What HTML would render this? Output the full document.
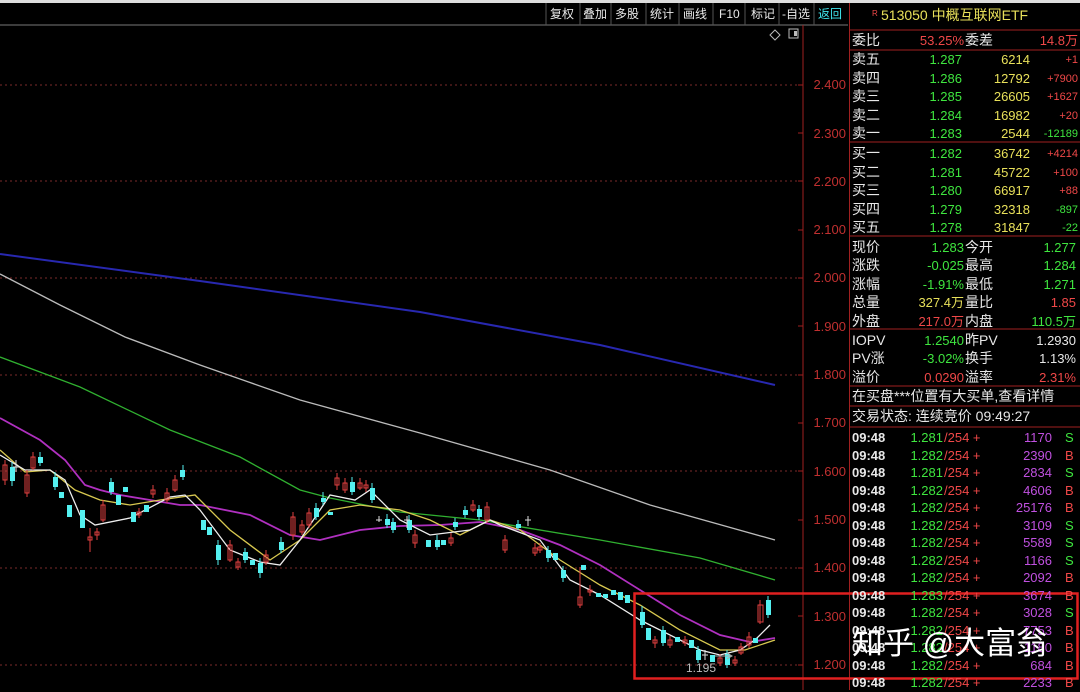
<!DOCTYPE html>
<html><head><meta charset="utf-8"><style>
*{margin:0;padding:0}
body{width:1080px;height:690px;background:#000;overflow:hidden;position:relative;font-family:"Liberation Sans","Noto Sans CJK SC",sans-serif;}
.t{position:absolute;white-space:nowrap;font-size:13px;line-height:16px}
.w{color:#e8e8e8}.g{color:#3fe63f}.y{color:#e8e05a}.r{color:#f04848}.p{color:#c050e0}.c{color:#40e8f0}
.rt{text-align:right}
</style></head><body>
<svg width="1080" height="690" style="position:absolute;left:0;top:0">
<rect x="0" y="0" width="1080" height="3" fill="#ddd"/>
<line x1="0" y1="25" x2="848" y2="25" stroke="#777"/>
<g stroke="#555"><line x1="546" y1="3" x2="546" y2="25"/><line x1="580" y1="3" x2="580" y2="25"/><line x1="611" y1="3" x2="611" y2="25"/><line x1="646" y1="3" x2="646" y2="25"/><line x1="679" y1="3" x2="679" y2="25"/><line x1="713" y1="3" x2="713" y2="25"/><line x1="745" y1="3" x2="745" y2="25"/><line x1="779" y1="3" x2="779" y2="25"/><line x1="814" y1="3" x2="814" y2="25"/></g>
<line x1="803" y1="25" x2="803" y2="690" stroke="#a02020"/>
<line x1="849.5" y1="3" x2="849.5" y2="690" stroke="#a02020"/>
<g stroke="#a02020"><line x1="850" y1="30" x2="1080" y2="30"/><line x1="850" y1="50" x2="1080" y2="50"/><line x1="850" y1="142" x2="1080" y2="142"/><line x1="850" y1="236" x2="1080" y2="236"/><line x1="850" y1="329" x2="1080" y2="329"/><line x1="850" y1="386" x2="1080" y2="386"/><line x1="850" y1="406" x2="1080" y2="406"/><line x1="850" y1="427" x2="1080" y2="427"/></g>
<g stroke="#7a2a2a" stroke-dasharray="2,3"><line x1="0" y1="85" x2="800" y2="85"/><line x1="0" y1="181" x2="800" y2="181"/><line x1="0" y1="278" x2="800" y2="278"/><line x1="0" y1="375" x2="800" y2="375"/><line x1="0" y1="471" x2="800" y2="471"/><line x1="0" y1="568" x2="800" y2="568"/><line x1="0" y1="665" x2="800" y2="665"/></g>
<g stroke="#a02020"><line x1="798" y1="85" x2="803" y2="85"/><line x1="798" y1="133" x2="803" y2="133"/><line x1="798" y1="181" x2="803" y2="181"/><line x1="798" y1="230" x2="803" y2="230"/><line x1="798" y1="278" x2="803" y2="278"/><line x1="798" y1="326" x2="803" y2="326"/><line x1="798" y1="375" x2="803" y2="375"/><line x1="798" y1="423" x2="803" y2="423"/><line x1="798" y1="471" x2="803" y2="471"/><line x1="798" y1="520" x2="803" y2="520"/><line x1="798" y1="568" x2="803" y2="568"/><line x1="798" y1="616" x2="803" y2="616"/><line x1="798" y1="665" x2="803" y2="665"/></g>
<g fill="none" stroke-width="1.3">
<polyline stroke="#2828b0" stroke-width="2" points="0,254 200,281 420,312 600,345 775,385"/>
<polyline stroke="#bbb" points="0,274 60,305 125,337 200,365 300,400 420,433 550,470 650,505 775,540"/>
<polyline stroke="#30b030" points="0,357 80,387 170,430 240,457 300,490 330,498 400,512 480,520 600,540 700,558 775,580"/>
<polyline stroke="#b030c0" stroke-width="1.8" points="0,418 40,440 65,460 85,485 100,490 120,495 150,500 180,505 200,505 250,515 290,535 320,540 360,530 400,526 440,525 480,522 520,530 560,545 600,565 640,590 680,615 720,635 750,642 775,638"/>
<polyline stroke="#d8c850" points="0,450 25,472 50,470 75,490 100,500 130,505 160,500 195,495 230,530 270,560 300,540 330,510 360,505 400,510 430,520 460,535 490,520 520,530 560,560 600,585 640,605 680,630 720,650 745,650 775,640"/>
<polyline stroke="#eee" points="0,455 25,470 50,470 65,480 80,515 95,525 130,518 170,497 185,495 200,510 230,550 260,562 280,565 300,540 330,495 355,500 370,490 400,520 430,535 470,530 490,520 500,525 540,540 570,580 600,595 640,620 680,640 700,650 720,655 740,650 755,640 770,625"/>
</g>
<path stroke="#e04040" d="M5,460V485M27,470V497M33,452V470M90,528V552M97,528V540M103,500V522M139,508V518M153,485V498M167,488V503M175,475V492M230,540V562M238,558V570M266,550V565M293,512V540M302,520V535M309,508V528M337,473V490M345,478V493M360,478V490M366,480V492M415,530V548M451,533V546M473,500V512M487,502V523M505,535V553M535,543V556M540,543V553M580,567V608M590,585V596M655,636V648M670,636V648M685,636V646M720,654V666M735,656V666M741,643V655M749,632V648M760,600V624"/>
<g fill="none" stroke="#e04040"><rect x="3" y="465" width="4" height="15"/><rect x="25" y="475" width="4" height="18"/><rect x="31" y="457" width="4" height="11"/><rect x="88" y="537" width="4" height="3"/><rect x="95" y="532" width="4" height="3"/><rect x="101" y="505" width="4" height="15"/><rect x="137" y="512" width="4" height="3"/><rect x="151" y="490" width="4" height="4"/><rect x="165" y="493" width="4" height="7"/><rect x="173" y="480" width="4" height="10"/><rect x="228" y="545" width="4" height="15"/><rect x="236" y="562" width="4" height="5"/><rect x="264" y="555" width="4" height="7"/><rect x="291" y="517" width="4" height="18"/><rect x="300" y="525" width="4" height="7"/><rect x="307" y="513" width="4" height="12"/><rect x="335" y="478" width="4" height="7"/><rect x="343" y="483" width="4" height="7"/><rect x="358" y="483" width="4" height="5"/><rect x="364" y="485" width="4" height="3"/><rect x="413" y="535" width="4" height="8"/><rect x="449" y="538" width="4" height="5"/><rect x="471" y="505" width="4" height="5"/><rect x="485" y="507" width="4" height="13"/><rect x="503" y="540" width="4" height="10"/><rect x="533" y="548" width="4" height="5"/><rect x="538" y="547" width="4" height="3"/><rect x="578" y="597" width="4" height="8"/><rect x="588" y="590" width="4" height="2"/><rect x="653" y="640" width="4" height="3"/><rect x="668" y="640" width="4" height="5"/><rect x="683" y="640" width="4" height="3"/><rect x="718" y="658" width="4" height="5"/><rect x="733" y="660" width="4" height="3"/><rect x="739" y="647" width="4" height="6"/><rect x="747" y="637" width="4" height="8"/><rect x="758" y="605" width="5" height="17"/></g>
<path stroke="#54f0f0" d="M12,462V486M40,452V466M55,472V490M111,478V495M183,465V480M218,540V565M245,548V563M260,558V578M281,537V553M316,503V520M323,492V505M352,477V495M372,483V503M387,514V528M393,518V533M409,515V533M437,535V550M455,518V530M465,506V518M479,505V520M518,520V530M548,546V562M563,566V582M642,606V628M663,626V646M698,646V663M727,650V668M768,596V618"/>
<g fill="#54f0f0"><rect x="10" y="467" width="5" height="14"/><rect x="38" y="457" width="5" height="6"/><rect x="53" y="477" width="5" height="10"/><rect x="59" y="492" width="5" height="6"/><rect x="67" y="505" width="5" height="12"/><rect x="80" y="510" width="5" height="18"/><rect x="109" y="482" width="5" height="10"/><rect x="116" y="495" width="5" height="10"/><rect x="123" y="487" width="5" height="5"/><rect x="131" y="512" width="5" height="10"/><rect x="144" y="505" width="5" height="7"/><rect x="180" y="470" width="5" height="7"/><rect x="201" y="520" width="5" height="10"/><rect x="207" y="527" width="5" height="8"/><rect x="216" y="545" width="5" height="15"/><rect x="243" y="552" width="5" height="8"/><rect x="250" y="560" width="5" height="5"/><rect x="258" y="563" width="5" height="10"/><rect x="279" y="542" width="5" height="8"/><rect x="314" y="508" width="5" height="9"/><rect x="321" y="498" width="5" height="4"/><rect x="328" y="512" width="5" height="3"/><rect x="350" y="482" width="5" height="10"/><rect x="370" y="488" width="5" height="12"/><rect x="385" y="519" width="5" height="6"/><rect x="391" y="522" width="5" height="8"/><rect x="407" y="520" width="5" height="10"/><rect x="426" y="540" width="5" height="7"/><rect x="435" y="540" width="5" height="7"/><rect x="441" y="540" width="5" height="5"/><rect x="453" y="522" width="5" height="5"/><rect x="463" y="510" width="5" height="5"/><rect x="477" y="509" width="5" height="8"/><rect x="516" y="524" width="5" height="4"/><rect x="546" y="550" width="5" height="8"/><rect x="553" y="553" width="5" height="7"/><rect x="561" y="570" width="5" height="8"/><rect x="581" y="565" width="5" height="5"/><rect x="596" y="593" width="5" height="4"/><rect x="603" y="594" width="5" height="4"/><rect x="611" y="590" width="5" height="5"/><rect x="618" y="592" width="5" height="8"/><rect x="625" y="595" width="5" height="8"/><rect x="640" y="612" width="5" height="13"/><rect x="646" y="628" width="5" height="12"/><rect x="661" y="630" width="5" height="13"/><rect x="675" y="637" width="5" height="5"/><rect x="689" y="640" width="5" height="8"/><rect x="696" y="650" width="5" height="10"/><rect x="710" y="655" width="5" height="7"/><rect x="725" y="654" width="5" height="11"/><rect x="753" y="638" width="5" height="5"/><rect x="766" y="600" width="5" height="15"/></g>
<path stroke="#ddd" d="M16,460V472M13,467H19M379,516V522M376,520H382M407,516V528M404,520H410M528,516V526M525,520H531M705,650V660M702,655H708"/>
<path stroke="#aaa" fill="none" d="M715,656H732M727,653L732,656L727,659"/>
<rect x="634.5" y="593.5" width="443" height="85" fill="none" stroke="#e02020" stroke-width="2.5"/>
<path d="M775,30l5,5l-5,5l-5,-5z" fill="none" stroke="#bbb"/>
<rect x="789" y="29" width="9" height="9" fill="none" stroke="#bbb"/><rect x="794" y="31" width="3" height="5" fill="#bbb"/>
</svg>
<div class="t w" style="left:550px;top:6px;font-size:12px;word-spacing:0">复权</div>
<div class="t w" style="left:583px;top:6px;font-size:12px">叠加</div>
<div class="t w" style="left:615px;top:6px;font-size:12px">多股</div>
<div class="t w" style="left:650px;top:6px;font-size:12px">统计</div>
<div class="t w" style="left:683px;top:6px;font-size:12px">画线</div>
<div class="t w" style="left:719px;top:6px;font-size:12px">F10</div>
<div class="t w" style="left:751px;top:6px;font-size:12px">标记</div>
<div class="t w" style="left:782px;top:6px;font-size:12px">-自选</div>
<div class="t c" style="left:818px;top:6px;font-size:12px">返回</div>
<div class="t r" style="left:872px;top:6px;font-size:8px">R</div>
<div class="t y" style="left:881px;top:7px;font-size:14px">513050 中概互联网ETF</div>
<div style="position:absolute;left:806px;top:0;width:40px;font-size:12px;color:#c03030;text-align:right">
<div class="t rt" style="right:0;top:77px">2.400</div><div class="t rt" style="right:0;top:126px">2.300</div><div class="t rt" style="right:0;top:174px">2.200</div><div class="t rt" style="right:0;top:222px">2.100</div><div class="t rt" style="right:0;top:270px">2.000</div><div class="t rt" style="right:0;top:319px">1.900</div><div class="t rt" style="right:0;top:367px">1.800</div><div class="t rt" style="right:0;top:415px">1.700</div><div class="t rt" style="right:0;top:464px">1.600</div><div class="t rt" style="right:0;top:512px">1.500</div><div class="t rt" style="right:0;top:560px">1.400</div><div class="t rt" style="right:0;top:609px">1.300</div><div class="t rt" style="right:0;top:657px">1.200</div>
</div>
<div class="t" style="left:686px;top:660px;font-size:12px;color:#bbb">1.195</div>
<div style="position:absolute;left:852px;top:0;width:226px;height:690px;font-size:13px">
<div class="t w" style="left:0;top:32px;font-size:14px">委比</div><div class="t r rt" style="right:114px;top:33px">53.25%</div><div class="t w" style="left:113px;top:32px;font-size:14px">委差</div><div class="t r rt" style="right:0;top:33px">14.8万</div>
<div class="t w" style="left:0;top:50px;font-size:14px;line-height:18.6px">卖五<br>卖四<br>卖三<br>卖二<br>卖一</div>
<div class="t g rt" style="right:116px;top:51px;line-height:18.6px">1.287<br>1.286<br>1.285<br>1.284<br>1.283</div>
<div class="t y rt" style="right:48px;top:51px;line-height:18.6px">6214<br>12792<br>26605<br>16982<br>2544</div>
<div class="t rt" style="right:0;top:51px;line-height:18.6px;font-size:11px"><span class="r">+1</span><br><span class="r">+7900</span><br><span class="r">+1627</span><br><span class="r">+20</span><br><span class="g">-12189</span></div>
<div class="t w" style="left:0;top:144px;font-size:14px;line-height:18.6px">买一<br>买二<br>买三<br>买四<br>买五</div>
<div class="t g rt" style="right:116px;top:145px;line-height:18.6px">1.282<br>1.281<br>1.280<br>1.279<br>1.278</div>
<div class="t y rt" style="right:48px;top:145px;line-height:18.6px">36742<br>45722<br>66917<br>32318<br>31847</div>
<div class="t rt" style="right:0;top:145px;line-height:18.6px;font-size:11px"><span class="r">+4214</span><br><span class="r">+100</span><br><span class="r">+88</span><br><span class="g">-897</span><br><span class="g">-22</span></div>
<div class="t w" style="left:0;top:238px;font-size:14px;line-height:18.4px">现价<br>涨跌<br>涨幅<br>总量<br>外盘</div>
<div class="t rt" style="right:114px;top:239px;line-height:18.4px"><span class="g">1.283</span><br><span class="g">-0.025</span><br><span class="g">-1.91%</span><br><span class="y">327.4万</span><br><span class="r">217.0万</span></div>
<div class="t w" style="left:113px;top:238px;font-size:14px;line-height:18.4px">今开<br>最高<br>最低<br>量比<br>内盘</div>
<div class="t rt" style="right:2px;top:239px;line-height:18.4px"><span class="g">1.277</span><br><span class="g">1.284</span><br><span class="g">1.271</span><br><span class="r">1.85</span><br><span class="g">110.5万</span></div>
<div class="t w" style="left:0;top:331px;font-size:14px;line-height:18.4px">IOPV<br>PV涨<br>溢价</div>
<div class="t rt" style="right:114px;top:332px;line-height:18.4px"><span class="g">1.2540</span><br><span class="g">-3.02%</span><br><span class="r">0.0290</span></div>
<div class="t w" style="left:113px;top:331px;font-size:14px;line-height:18.4px">昨PV<br>换手<br>溢率</div>
<div class="t rt" style="right:2px;top:332px;line-height:18.4px"><span class="w">1.2930</span><br><span class="w">1.13%</span><br><span class="r">2.31%</span></div>
<div class="t w" style="left:0;top:388px;font-size:14px">在买盘***位置有大买单,查看详情</div>
<div class="t w" style="left:0;top:408px;font-size:14px">交易状态: 连续竞价 09:49:27</div>
<div class="t w" style="left:0;top:429px;line-height:17.5px;font-weight:bold">09:48<br>09:48<br>09:48<br>09:48<br>09:48<br>09:48<br>09:48<br>09:48<br>09:48<br>09:48<br>09:48<br>09:48<br>09:48<br>09:48<br>09:48</div>
<div class="t g rt" style="right:135px;top:429px;line-height:17.5px">1.281<br>1.282<br>1.281<br>1.282<br>1.282<br>1.282<br>1.282<br>1.282<br>1.282<br>1.283<br>1.282<br>1.282<br>1.282<br>1.282<br>1.282</div>
<div class="t r" style="left:92px;top:429px;line-height:17.5px">/254 +<br>/254 +<br>/254 +<br>/254 +<br>/254 +<br>/254 +<br>/254 +<br>/254 +<br>/254 +<br>/254 +<br>/254 +<br>/254 +<br>/254 +<br>/254 +<br>/254 +</div>
<div class="t p rt" style="right:26px;top:429px;line-height:17.5px">1170<br>2390<br>2834<br>4606<br>25176<br>3109<br>5589<br>1166<br>2092<br>3674<br>3028<br>7753<br>1180<br>684<br>2233</div>
<div class="t" style="left:213px;top:429px;line-height:17.5px"><span class="g">S</span><br><span class="r">B</span><br><span class="g">S</span><br><span class="r">B</span><br><span class="r">B</span><br><span class="g">S</span><br><span class="g">S</span><br><span class="g">S</span><br><span class="r">B</span><br><span class="r">B</span><br><span class="g">S</span><br><span class="r">B</span><br><span class="r">B</span><br><span class="r">B</span><br><span class="r">B</span></div>
</div>
<div class="t" style="left:852px;top:624px;font-size:31px;line-height:40px;color:#fff">知乎 @大富翁</div>
</body></html>
